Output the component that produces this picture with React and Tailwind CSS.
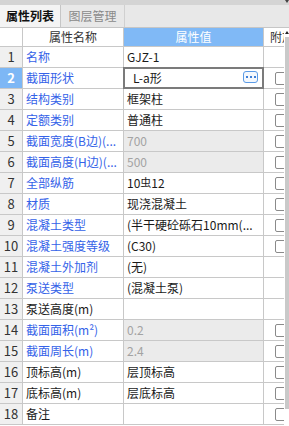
import React from "react";

const rows = [
  { name: "名称", value: "GJZ-1", blue: true },
  { name: "截面形状", value: "L-a形", blue: true, check: true, selected: true },
  { name: "结构类别", value: "框架柱", blue: true, check: true },
  { name: "定额类别", value: "普通柱", blue: true, check: true },
  { name: "截面宽度(B边)(...", value: "700", blue: true, muted: true, check: true },
  { name: "截面高度(H边)(...", value: "500", blue: true, muted: true, check: true },
  { name: "全部纵筋", value: "rebar", blue: true, check: true },
  { name: "材质", value: "现浇混凝土", blue: true, check: true },
  { name: "混凝土类型", value: "(半干硬砼砾石10mm(...", blue: true, check: true },
  { name: "混凝土强度等级", value: "(C30)", blue: true, check: true },
  { name: "混凝土外加剂", value: "(无)", blue: true },
  { name: "泵送类型", value: "(混凝土泵)", blue: true },
  { name: "泵送高度(m)", value: "" },
  { name: "截面面积(m²)", value: "0.2", blue: true, muted: true, check: true },
  { name: "截面周长(m)", value: "2.4", blue: true, muted: true, check: true },
  { name: "顶标高(m)", value: "层顶标高", check: true },
  { name: "底标高(m)", value: "层底标高", check: true },
  { name: "备注", value: "", check: true },
];

function Value({ row }) {
  if (row.value === "rebar") {
    return (
      <span>
        10<span className="relative -top-px text-[11px]">虫</span>12
      </span>
    );
  }
  return <span>{row.value}</span>;
}

export default function App() {
  return (
    <div className="relative h-[426px] w-[289px] overflow-hidden bg-white font-['Noto_Sans_CJK_SC','Noto_Sans',sans-serif] text-[12px] text-[#1a1a1a]">
      <div className="h-[5px] bg-[#d4d4d4]" />

      {/* tabs */}
      <div className="flex h-[23px] border-b border-[#c6c6c6] bg-[#e8e8e8]">
        <div className="flex w-[61px] items-center justify-center border-r border-[#c6c6c6] bg-[#f4f4f4] font-semibold text-[#111]">
          属性列表
        </div>
        <div className="flex w-[64px] items-center justify-center border-r border-[#d0d0d0] text-[#8a8a8a]">
          图层管理
        </div>
      </div>

      {/* header */}
      <div className="flex h-[19px] border-b border-[#c8c8c8]">
        <div className="w-[23px] border-r border-[#c8c8c8] bg-white" />
        <div className="flex w-[101px] items-center justify-center border-r border-[#c8c8c8] text-[#333]">
          属性名称
        </div>
        <div className="flex w-[140px] items-center justify-center border-r border-[#c8c8c8] bg-[#80b9f6] text-white">
          属性值
        </div>
        <div className="flex flex-1 items-center overflow-hidden whitespace-nowrap pl-[6px] text-[#333]">
          附加
        </div>
      </div>

      {/* rows */}
      {rows.map((row, i) => (
        <div key={i} className="flex h-[21px] border-b border-[#c8c8c8]">
          <div
            className={
              row.selected
                ? "flex w-[23px] items-center justify-center border-r border-[#c8c8c8] bg-[#7db7f5] text-[13px] font-bold text-white"
                : "flex w-[23px] items-center justify-center border-r border-[#c8c8c8] bg-[#f0f0f0] text-[13px] text-[#333]"
            }
          >
            {i + 1}
          </div>
          <div
            className={
              row.blue
                ? "flex w-[101px] items-center overflow-hidden whitespace-nowrap border-r border-[#c8c8c8] pl-[3px] text-[#3462e8]"
                : "flex w-[101px] items-center overflow-hidden whitespace-nowrap border-r border-[#c8c8c8] pl-[3px] text-[#1a1a1a]"
            }
          >
            {row.name}
          </div>
          <div
            className={
              row.muted
                ? "flex w-[140px] items-center overflow-hidden whitespace-nowrap border-r border-[#c8c8c8] bg-[#ebebeb] pl-[3px] text-[#a3a3a3]"
                : row.selected
                ? "relative flex w-[140px] items-center border-r border-[#c8c8c8] pl-[9px]"
                : "flex w-[140px] items-center overflow-hidden whitespace-nowrap border-r border-[#c8c8c8] pl-[3px]"
            }
          >
            <Value row={row} />
            {row.selected ? (
              <>
                <div className="absolute -left-px -top-px -right-px -bottom-px border-2 border-[#7b7b7b]" />
                <div className="absolute right-[5px] top-[3px] flex h-[12px] w-[15px] items-center justify-center gap-[2px] rounded-[3px] border border-[#5b9be6] bg-[#f4f8fd]">
                  <span className="h-[2px] w-[2px] bg-[#3f7fd6]" />
                  <span className="h-[2px] w-[2px] bg-[#3f7fd6]" />
                  <span className="h-[2px] w-[2px] bg-[#3f7fd6]" />
                </div>
              </>
            ) : null}
          </div>
          <div className="flex flex-1 items-center pl-[11px]">
            {row.check ? (
              <div className="h-[13px] w-[13px] shrink-0 rounded-[2px] border border-[#8a8a8a] bg-white" />
            ) : null}
          </div>
        </div>
      ))}

      {/* vertical scrollbar */}
      <div className="absolute right-0 top-[28px] bottom-0 w-[5px] bg-white">
        <div className="mx-auto mt-[3px] h-0 w-0 border-x-[2px] border-b-[3px] border-x-transparent border-b-[#222]" />
        <div className="mt-[3px] h-[372px] w-[4px] ml-px bg-[#c9c9c9]" />
      </div>
      <div className="absolute right-0 top-0 h-0 w-0 border-x-[2px] border-t-[3px] border-x-transparent border-t-[#444]" />
    </div>
  );
}
